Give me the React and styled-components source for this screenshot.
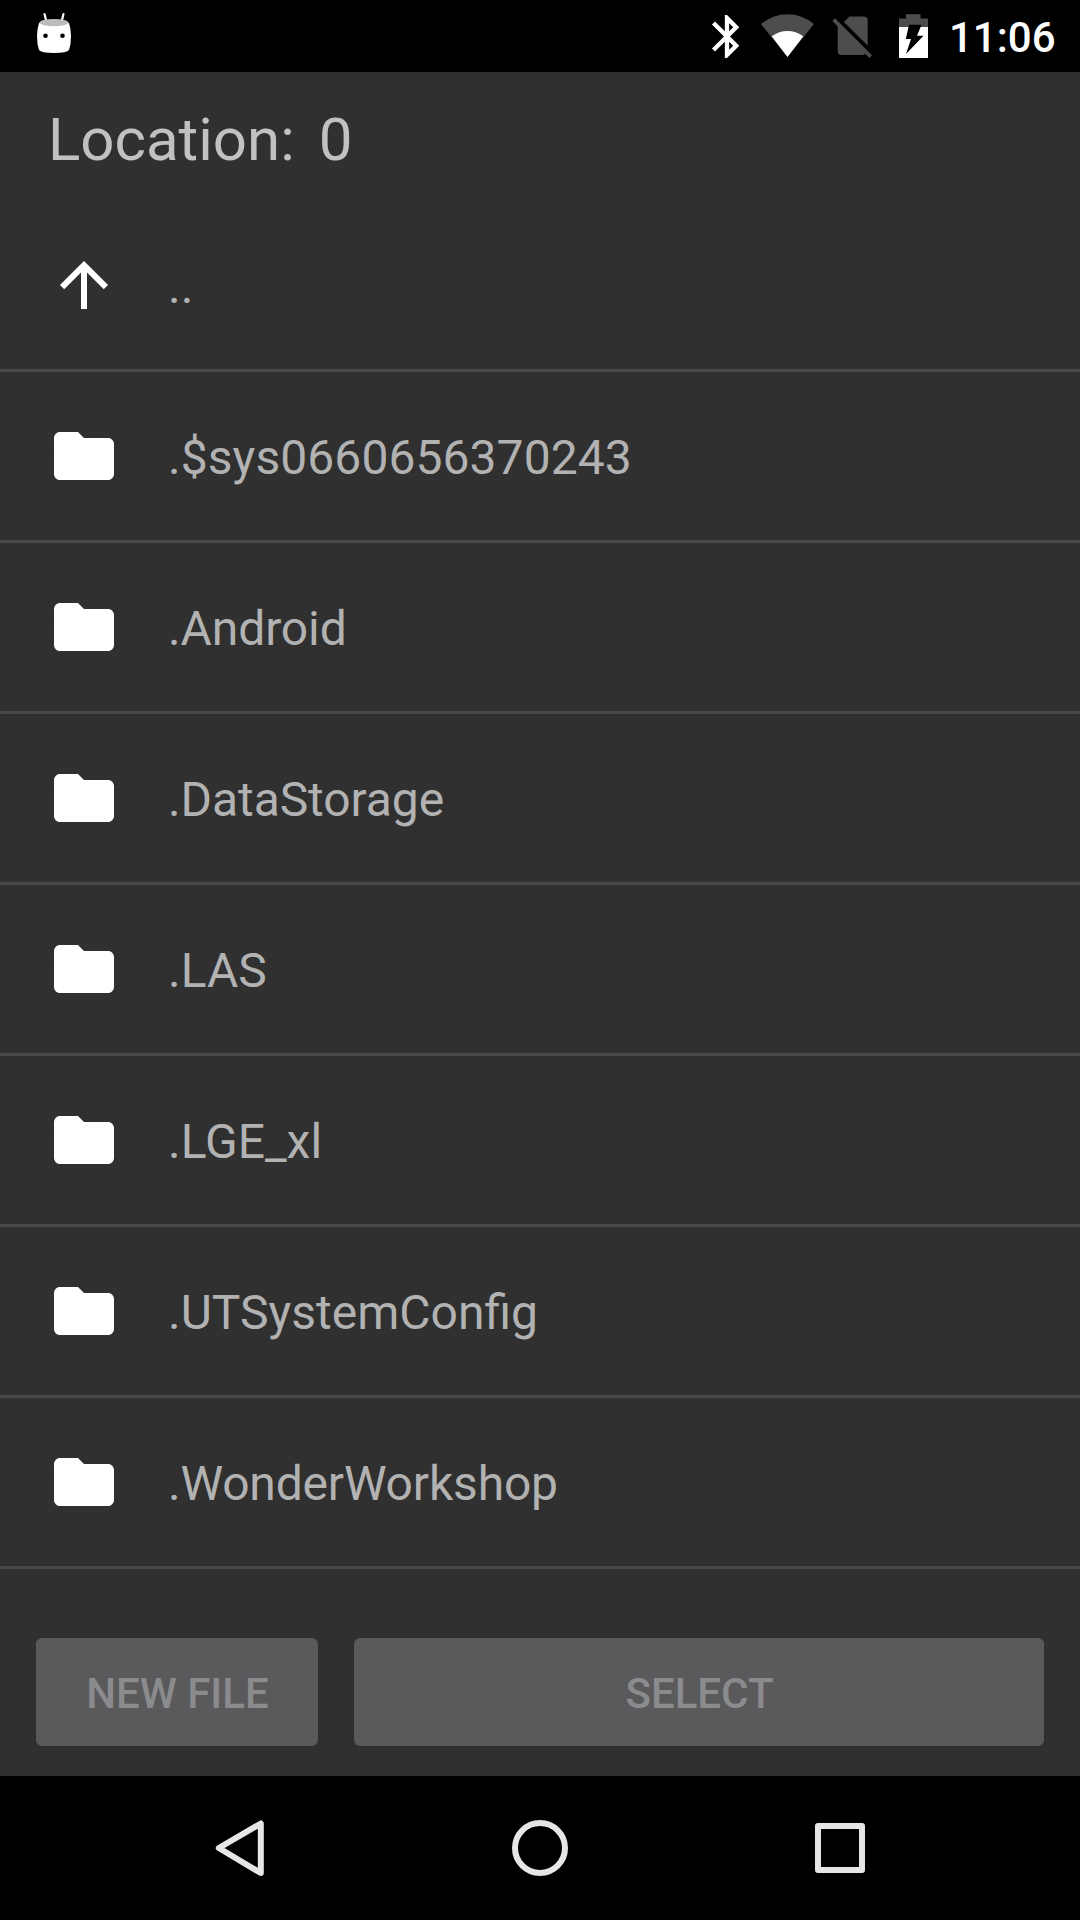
import React from "react";
import styled, { createGlobalStyle } from "styled-components";

const GlobalStyle = createGlobalStyle`
  * { box-sizing: border-box; }
  body { margin: 0; background: #303030; }
`;

const Screen = styled.div`
  display: flex;
  flex-direction: column;
  width: 1080px;
  height: 1920px;
  overflow: hidden;
  background: #303030;
  font-family: Roboto, sans-serif;
`;

const StatusBar = styled.header`
  display: flex;
  justify-content: space-between;
  flex: none;
  height: 72px;
  padding: 0 25px 0 30px;
  background: #000;
`;

const StatusGroup = styled.div`
  display: flex;
  height: 72px;
`;

const Glyph = styled.svg`
  display: block;
  flex: none;
`;

const Clock = styled.time`
  width: 106px;
  padding-top: 3px;
  color: #fff;
  font-size: 42px;
  font-weight: 500;
  line-height: 70px;
`;

const LocationBar = styled.div`
  display: flex;
  gap: 24px;
  flex: none;
  height: 129px;
  padding: 33px 48px 0;
  color: #c1c1c1;
  font-size: 60px;
  line-height: 70px;
`;

const FileList = styled.ul`
  flex: 1;
  margin: 0;
  padding: 0;
  list-style: none;
`;

const FileRow = styled.li`
  display: flex;
  align-items: center;
  gap: 48px;
  height: 171px;
  padding: 0 48px;
  border-bottom: 3px solid #494949;
`;

const FileName = styled.span`
  padding-top: 4px;
  color: #b2b2b2;
  font-size: 48px;
  line-height: 56px;
  letter-spacing: ${({ $tracking = 0 }) => $tracking}px;
`;

const Actions = styled.div`
  display: grid;
  grid-template-columns: 282px 1fr;
  gap: 36px;
  flex: none;
  padding: 0 36px 30px;
`;

const ActionButton = styled.button`
  height: 108px;
  padding: 3px 0 0 1px;
  border: 0;
  border-radius: 6px;
  background: #5a5a5c;
  color: #8b8b8d;
  font: 500 42px/50px Roboto, sans-serif;
`;

const NavBar = styled.nav`
  display: flex;
  justify-content: center;
  align-items: center;
  gap: 156px;
  flex: none;
  height: 144px;
  background: #000;
`;

const MarshmallowIcon = () => (
  <Glyph width="48" height="72" viewBox="30 0 48 72">
    <path d="M44.5 14l2 8M63.500 14l-2 8" stroke="#fff" strokeWidth="2.2" strokeLinecap="round" />
    <path d="M39 23Q54 17 69 23Q71 29 71 36Q71 44 69 50Q67 53 54 53Q41 53 39 50Q37 44 37 36Q37 29 39 23Z" fill="#fff" />
    <ellipse cx="54" cy="22.600" rx="14.500" ry="3.700" fill="#bdbdbd" />
    <circle cx="45.500" cy="35.800" r="2.300" fill="#000" />
    <circle cx="62.500" cy="35.800" r="2.300" fill="#000" />
  </Glyph>
);

const BluetoothIcon = () => (
  <Glyph width="50" height="72" viewBox="700 0 50 72">
    <path
      transform="translate(701.2 10.700) scale(2.15)"
      fill="#fff"
      d="M17.710 7.710L12 2h-1v7.590L6.410 5 5 6.410 10.590 12 5 17.590 6.410 19 11 14.410V22h1l5.710-5.710-4.300-4.290 4.300-4.290zM13 5.830l1.880 1.880L13 9.590V5.830zm1.880 10.460L13 18.170v-3.760l1.880 1.880z"
    />
  </Glyph>
);

const WifiIcon = () => (
  <Glyph width="74" height="72" viewBox="750 0 74 72">
    <path d="M787.500 57L761 24Q773 14.300 787.500 14.300Q802 14.300 814 24Z" fill="#4d4d4d" />
    <path d="M787.500 57L771.700 36.300Q779 31 787.500 31Q796 31 803.300 36.300Z" fill="#fff" />
  </Glyph>
);

const NoSimIcon = () => (
  <Glyph width="64" height="72" viewBox="824 0 64 72">
    <path d="M843.800 22L849.500 16.500H864Q867.700 16.500 867.700 20.500V45.500Z" fill="#4d4d4d" />
    <path d="M835 18.300L872 55.300L869.500 58L865 53.800Q864 55 862 55H841.500Q837.700 55 837.700 51V26.500L832.400 21Z" fill="#4d4d4d" />
  </Glyph>
);

const BatteryIcon = () => (
  <Glyph width="61" height="72" viewBox="888 0 61 72">
    <path d="M899 27V18.500H906V14.300H920.500V18.500H928V27Z" fill="#4d4d4d" />
    <path d="M899 27H928V58H899Z" fill="#fff" />
    <path d="M909 24.800H921.500L917 35.800H923.500L906 54L911 39H905.800Z" fill="#000" />
  </Glyph>
);

const UpIcon = () => (
  <Glyph width="72" height="72" viewBox="0 0 24 24">
    <path d="M4 12l1.410 1.410L11 7.830V20h2V7.830l5.580 5.590L20 12l-8-8-8 8z" fill="#fff" />
  </Glyph>
);

const FolderIcon = () => (
  <Glyph width="72" height="72" viewBox="0 0 24 24">
    <path d="M10 4H4c-1.100 0-1.990.9-1.990 2L2 18c0 1.100.9 2 2 2h16c1.100 0 2-.9 2-2V8c0-1.100-.9-2-2-2h-8l-2-2z" fill="#fff" />
  </Glyph>
);

const NavIcon = ({ children }) => (
  <Glyph width="144" height="144" viewBox="0 0 144 144" fill="none" stroke="#e6e6e6" strokeWidth="6" strokeLinejoin="round">
    {children}
  </Glyph>
);

const folders = [
  { name: ".$sys0660656370243", tracking: 0.07 },
  { name: ".Android", tracking: -0.1 },
  { name: ".DataStorage", tracking: -0.08 },
  { name: ".LAS" },
  { name: ".LGE_xl" },
  { name: ".UTSystemConfig" },
  { name: ".WonderWorkshop", tracking: -0.18 },
];

export default function App() {
  return (
    <Screen>
      <GlobalStyle />
      <StatusBar>
        <MarshmallowIcon />
        <StatusGroup>
          <BluetoothIcon />
          <WifiIcon />
          <NoSimIcon />
          <BatteryIcon />
          <Clock>11:06</Clock>
        </StatusGroup>
      </StatusBar>
      <LocationBar>
        <span>Location:</span>
        <span>0</span>
      </LocationBar>
      <FileList>
        <FileRow>
          <UpIcon />
          <FileName>..</FileName>
        </FileRow>
        {folders.map(({ name, tracking }) => (
          <FileRow key={name}>
            <FolderIcon />
            <FileName $tracking={tracking}>{name}</FileName>
          </FileRow>
        ))}
      </FileList>
      <Actions>
        <ActionButton>NEW FILE</ActionButton>
        <ActionButton>SELECT</ActionButton>
      </Actions>
      <NavBar>
        <NavIcon>
          <path d="M51 72L93 47.500V97Z" transform="translate(-.2 0)" />
        </NavIcon>
        <NavIcon>
          <circle cx="72" cy="72" r="25" />
        </NavIcon>
        <NavIcon>
          <rect x="50" y="50" width="44" height="44" />
        </NavIcon>
      </NavBar>
    </Screen>
  );
}
